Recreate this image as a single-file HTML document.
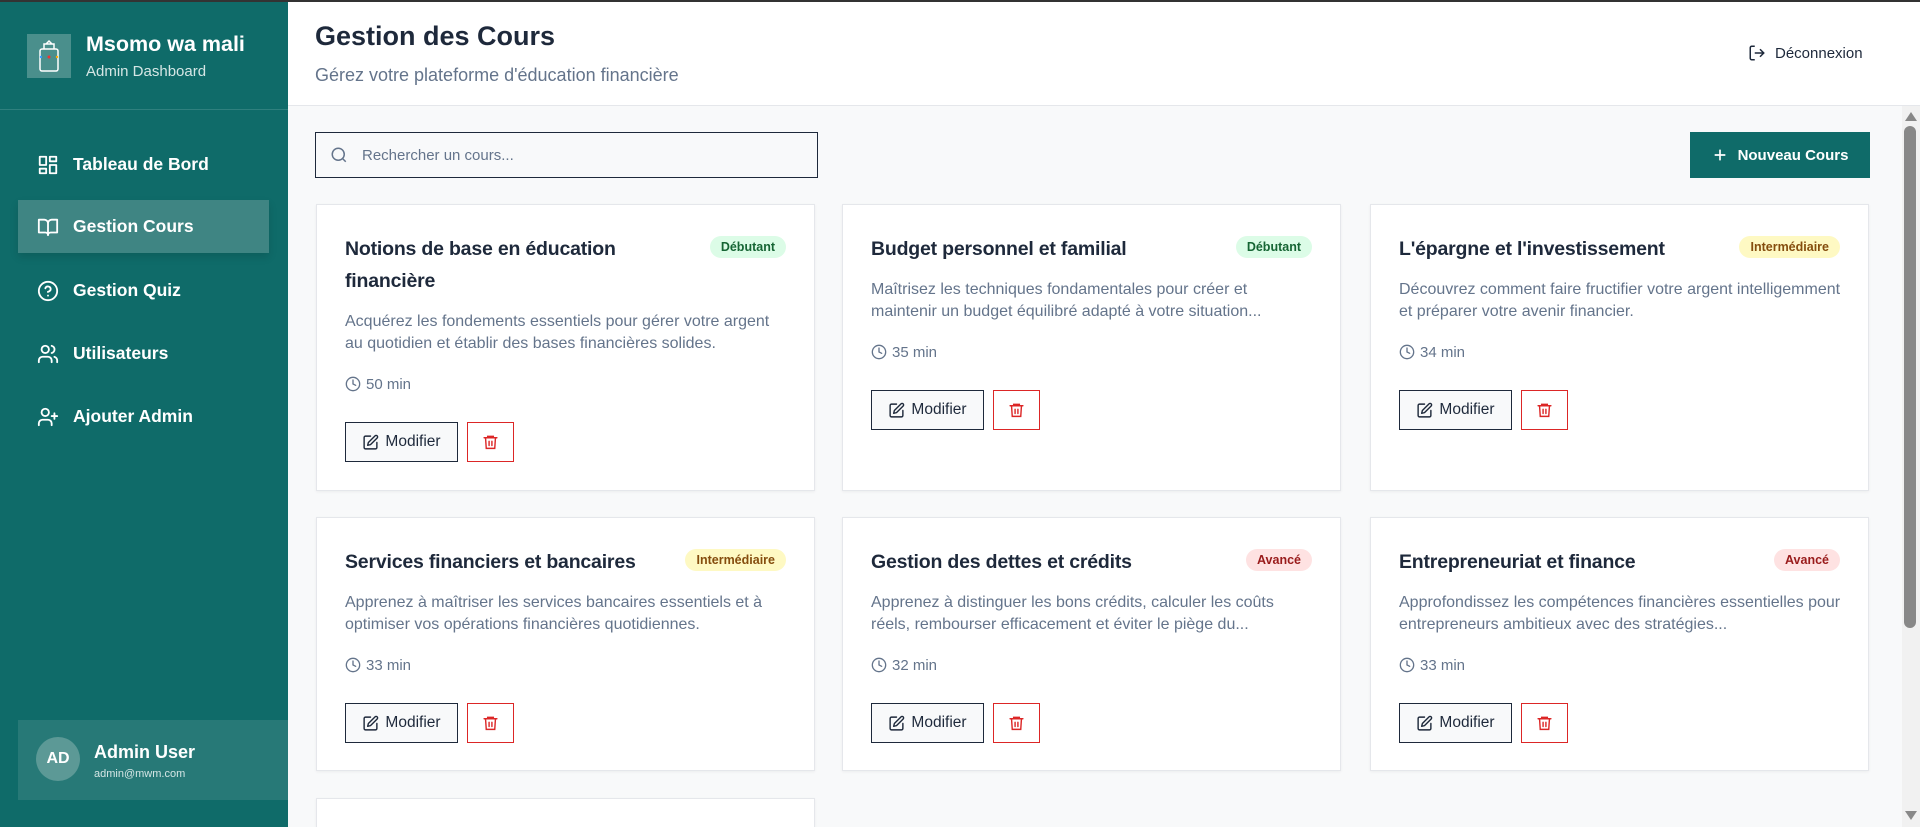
<!DOCTYPE html>
<html><head><meta charset="utf-8"><style>
*{box-sizing:border-box;margin:0;padding:0}
html{width:1920px;height:827px;overflow:hidden}
body{width:1920px;height:827px;overflow:hidden;font-family:"Liberation Sans",sans-serif;background:#f8f9fa;position:relative}
.topl{position:absolute;left:0;top:0;width:1920px;height:2px;background:#333;z-index:5}
.sb{position:absolute;left:0;top:0;width:288px;height:827px;background:#0f6b69;color:#fff}
.logo{position:absolute;left:27px;top:34px;width:44px;height:44px;background:#4a8f8c;display:flex;align-items:center;justify-content:center}
.brand{position:absolute;left:86px;top:32px;font-size:21.5px;font-weight:bold}
.brand2{position:absolute;left:86px;top:63px;font-size:15px;color:#d5e6e5}
.div{position:absolute;left:0;top:109px;width:288px;height:1px;background:#2f807e}
.nav{position:absolute;left:18px;width:251px;height:53px;display:flex;align-items:center;padding-left:19px;font-size:17.5px;font-weight:bold}
.nav svg{width:22px;height:22px;margin-right:14px;fill:none;stroke:#fff;stroke-width:2;stroke-linecap:round;stroke-linejoin:round}
.nav.act{background:#3f8583;box-shadow:0 4px 8px rgba(0,0,0,.12)}
.user{position:absolute;left:18px;top:720px;width:270px;height:80px;background:#277977}
.av{position:absolute;left:18px;top:17px;width:44px;height:44px;border-radius:50%;background:#5c9996;font-weight:bold;font-size:16px;display:flex;align-items:center;justify-content:center}
.un{position:absolute;left:76px;top:22px;font-size:18px;font-weight:bold}
.ue{position:absolute;left:76px;top:48px;font-size:11px;color:#d5e6e5}
.hd{position:absolute;left:288px;top:0;width:1632px;height:106px;background:#fff;border-bottom:1px solid #e5e7eb}
.ttl{position:absolute;left:27px;top:21px;font-size:27px;font-weight:bold;color:#1e293b}
.sub{position:absolute;left:27px;top:65px;font-size:18px;color:#64748b}
.dc{position:absolute;left:1460px;top:44px;font-size:15px;color:#1e293b;display:flex;align-items:center;gap:9px}
.search{position:absolute;left:315px;top:132px;width:503px;height:46px;border:1.5px solid #1e293b;background:#f8f9fa;display:flex;align-items:center;padding-left:14px;font-size:15px;color:#64748b}
.new{position:absolute;left:1690px;top:132px;width:180px;height:46px;background:#0f6b69;color:#fff;font-weight:bold;font-size:15px;display:flex;align-items:center;justify-content:center;gap:10px}
.card{position:absolute;width:499px;background:#fff;border:1px solid #e5e7eb;box-shadow:0 1px 3px rgba(0,0,0,.05);padding:28px 28px 28px}
.t{font-size:19.5px;font-weight:bold;color:#1e293b;line-height:32px;width:330px;letter-spacing:-0.2px}
.b{position:absolute;right:28px;top:31px;height:22px;padding:0 11px;border-radius:11px;font-size:12.5px;font-weight:bold;line-height:22px}
.g{background:#dcfce7;color:#166534}.y{background:#fef9c3;color:#854d0e}.r{background:#fee2e2;color:#991b1b}
.d{margin-top:14px;font-size:16px;line-height:22px;color:#64748b;width:442px}
.du{margin-top:19px;font-size:15px;color:#64748b;display:flex;align-items:center;gap:5px;height:20px}
.bt{margin-top:28px;display:flex;gap:9px}
.m{height:40px;width:113px;border:1.5px solid #1e293b;background:#f8f9fa;display:flex;align-items:center;justify-content:center;gap:6px;font-size:15.5px;color:#1e293b}
.x{height:40px;width:47px;border:1.5px solid #dc2626;display:flex;align-items:center;justify-content:center}
.sc{position:absolute;left:1902px;top:106px;width:18px;height:721px;background:#f1f1f1}
.th{position:absolute;left:1904px;top:126px;width:12px;height:502px;background:#888;border-radius:6px}
</style></head><body>
<div class="topl"></div>
<svg width="0" height="0" style="position:absolute"><defs>
<symbol id="clk" viewBox="0 0 24 24"><g fill="none" stroke="#64748b" stroke-width="2" stroke-linecap="round"><circle cx="12" cy="12" r="10"/><path d="M12 6v6l4 2"/></g></symbol>
<symbol id="ed" viewBox="0 0 24 24"><g fill="none" stroke="#1e293b" stroke-width="2" stroke-linecap="round" stroke-linejoin="round"><path d="M12 3H5a2 2 0 0 0-2 2v14a2 2 0 0 0 2 2h14a2 2 0 0 0 2-2v-7"/><path d="M18.4 2.6a2.1 2.1 0 0 1 3 3L12 15l-4 1 1-4z"/></g></symbol>
<symbol id="tr" viewBox="0 0 24 24"><g fill="none" stroke="#dc2626" stroke-width="2" stroke-linecap="round"><path d="M3 6h18M8 6V4h8v2M5 6l1 15h12l1-15M10 11v6M14 11v6"/></g></symbol>
</defs></svg>
<div class="sb">
<div class="logo"><svg width="26" height="34" viewBox="0 0 26 34" fill="none" stroke="#fff" stroke-width="1.5"><rect x="4" y="10" width="18" height="22" rx="2"/><path d="M8 10V5h10v5M10 5l3-3 3 3"/><circle cx="13" cy="18" r="1.5" fill="#e33" stroke="none"/><circle cx="5" cy="18" r="1.2" fill="#39f" stroke="none"/><circle cx="21" cy="18" r="1.2" fill="#fa0" stroke="none"/></svg></div>
<div class="brand">Msomo wa mali</div><div class="brand2">Admin Dashboard</div>
<div class="div"></div>
<div class="nav" style="top:138px"><svg viewBox="0 0 24 24"><rect x="3" y="3" width="7" height="9"/><rect x="14" y="3" width="7" height="5"/><rect x="14" y="12" width="7" height="9"/><rect x="3" y="16" width="7" height="5"/></svg>Tableau de Bord</div>
<div class="nav act" style="top:200px"><svg viewBox="0 0 24 24"><path d="M2 4h6a4 4 0 0 1 4 4v13a3 3 0 0 0-3-3H2zM22 4h-6a4 4 0 0 0-4 4v13a3 3 0 0 1 3-3h7z"/></svg>Gestion Cours</div>
<div class="nav" style="top:264px"><svg viewBox="0 0 24 24"><circle cx="12" cy="12" r="10"/><path d="M9.1 9a3 3 0 0 1 5.8 1c0 2-3 3-3 3M12 17h.01"/></svg>Gestion Quiz</div>
<div class="nav" style="top:327px"><svg viewBox="0 0 24 24"><path d="M16 21v-2a4 4 0 0 0-4-4H6a4 4 0 0 0-4 4v2"/><circle cx="9" cy="7" r="4"/><path d="M22 21v-2a4 4 0 0 0-3-3.9M16 3.1a4 4 0 0 1 0 7.8"/></svg>Utilisateurs</div>
<div class="nav" style="top:390px"><svg viewBox="0 0 24 24"><path d="M16 21v-2a4 4 0 0 0-4-4H6a4 4 0 0 0-4 4v2"/><circle cx="9" cy="7" r="4"/><path d="M19 8v6M22 11h-6"/></svg>Ajouter Admin</div>
<div class="user"><div class="av">AD</div><div class="un">Admin User</div><div class="ue">admin@mwm.com</div></div>
</div>
<div class="hd"><div class="ttl">Gestion des Cours</div><div class="sub">Gérez votre plateforme d'éducation financière</div>
<div class="dc"><svg width="18" height="18" viewBox="0 0 24 24" fill="none" stroke="#1e293b" stroke-width="2"><path d="M9 21H5a2 2 0 0 1-2-2V5a2 2 0 0 1 2-2h4M16 17l5-5-5-5M21 12H9"/></svg>Déconnexion</div></div>
<div class="search"><svg width="18" height="18" viewBox="0 0 24 24" fill="none" stroke="#64748b" stroke-width="2" style="margin-right:14px"><circle cx="11" cy="11" r="8"/><path d="M21 21l-4.3-4.3"/></svg>Rechercher un cours...</div>
<div class="new"><svg width="16" height="16" viewBox="0 0 24 24" fill="none" stroke="#fff" stroke-width="2.5"><path d="M12 4v16M4 12h16"/></svg>Nouveau Cours</div>

<div class="card" style="left:316px;top:204px;height:287px"><div class="t">Notions de base en éducation financière</div><span class="b g">Débutant</span><div class="d">Acquérez les fondements essentiels pour gérer votre argent au quotidien et établir des bases financières solides.</div><div class="du"><svg width="16" height="16"><use href="#clk"/></svg>50 min</div><div class="bt"><div class="m"><svg width="17" height="17"><use href="#ed"/></svg>Modifier</div><div class="x"><svg width="17" height="18"><use href="#tr"/></svg></div></div></div>
<div class="card" style="left:842px;top:204px;height:287px"><div class="t">Budget personnel et familial</div><span class="b g">Débutant</span><div class="d">Maîtrisez les techniques fondamentales pour créer et maintenir un budget équilibré adapté à votre situation...</div><div class="du"><svg width="16" height="16"><use href="#clk"/></svg>35 min</div><div class="bt"><div class="m"><svg width="17" height="17"><use href="#ed"/></svg>Modifier</div><div class="x"><svg width="17" height="18"><use href="#tr"/></svg></div></div></div>
<div class="card" style="left:1370px;top:204px;height:287px"><div class="t">L'épargne et l'investissement</div><span class="b y">Intermédiaire</span><div class="d">Découvrez comment faire fructifier votre argent intelligemment et préparer votre avenir financier.</div><div class="du"><svg width="16" height="16"><use href="#clk"/></svg>34 min</div><div class="bt"><div class="m"><svg width="17" height="17"><use href="#ed"/></svg>Modifier</div><div class="x"><svg width="17" height="18"><use href="#tr"/></svg></div></div></div>

<div class="card" style="left:316px;top:517px;height:254px"><div class="t" style="width:360px">Services financiers et bancaires</div><span class="b y">Intermédiaire</span><div class="d">Apprenez à maîtriser les services bancaires essentiels et à optimiser vos opérations financières quotidiennes.</div><div class="du"><svg width="16" height="16"><use href="#clk"/></svg>33 min</div><div class="bt"><div class="m"><svg width="17" height="17"><use href="#ed"/></svg>Modifier</div><div class="x"><svg width="17" height="18"><use href="#tr"/></svg></div></div></div>
<div class="card" style="left:842px;top:517px;height:254px"><div class="t">Gestion des dettes et crédits</div><span class="b r">Avancé</span><div class="d">Apprenez à distinguer les bons crédits, calculer les coûts réels, rembourser efficacement et éviter le piège du...</div><div class="du"><svg width="16" height="16"><use href="#clk"/></svg>32 min</div><div class="bt"><div class="m"><svg width="17" height="17"><use href="#ed"/></svg>Modifier</div><div class="x"><svg width="17" height="18"><use href="#tr"/></svg></div></div></div>
<div class="card" style="left:1370px;top:517px;height:254px"><div class="t">Entrepreneuriat et finance</div><span class="b r">Avancé</span><div class="d">Approfondissez les compétences financières essentielles pour entrepreneurs ambitieux avec des stratégies...</div><div class="du"><svg width="16" height="16"><use href="#clk"/></svg>33 min</div><div class="bt"><div class="m"><svg width="17" height="17"><use href="#ed"/></svg>Modifier</div><div class="x"><svg width="17" height="18"><use href="#tr"/></svg></div></div></div>

<div class="card" style="left:316px;top:798px;height:29px;border-bottom:none;padding:0"></div>
<div class="sc"></div><div class="th"></div>
<div style="position:absolute;left:1905px;top:112px;border-left:6px solid transparent;border-right:6px solid transparent;border-bottom:9px solid #888"></div>
<div style="position:absolute;left:1905px;top:811px;border-left:6px solid transparent;border-right:6px solid transparent;border-top:9px solid #888"></div>
</body></html>
